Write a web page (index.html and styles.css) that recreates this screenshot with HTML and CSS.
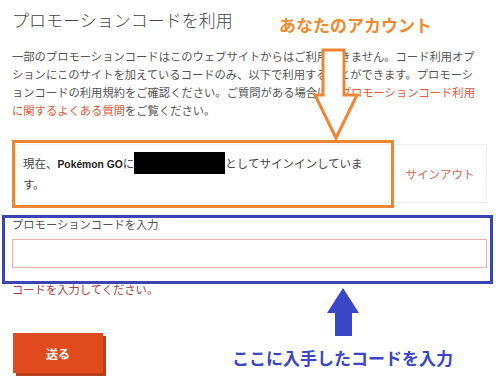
FILE: index.html
```html
<!DOCTYPE html>
<html lang="ja">
<head>
	<meta charset="UTF-8">
	<title>プロモーションコードを利用</title>
	<link rel="stylesheet" href="styles.css">
</head>
<body>
	<div class="page">
		<h1 class="title">プロモーションコードを利用</h1>
		<p class="intro">一部のプロモーションコードはこのウェブサイトからはご利用できません。コード利用オプションにこのサイトを加えているコードのみ、以下で利用することができます。プロモーションコードの利用規約をご確認ください。ご質問がある場合は、<a href="#" class="link">プロモーションコード利用に関するよくある質問</a>をご覧ください。</p>

		<div class="account">
			<div class="account-text">現在、<b>Pokémon GO</b>に<span class="hidden-name"></span>としてサインインしています。</div>
			<a href="#" class="signout">サインアウト</a>
		</div>

		<form class="code-form">
			<label class="code-label" for="code">プロモーションコードを入力</label>
			<input class="code-input" id="code" type="text">
			<div class="code-error">コードを入力してください。</div>
			<button class="send" type="button">送る</button>
		</form>
	</div>

	<!-- 説明用の注釈 -->
	<div class="note note-account">あなたのアカウント</div>
	<svg class="arrow-down" width="52" height="96" viewBox="0 0 52 96">
		<polygon points="13,4 34,4 34,49 47,49 26,92 5,49 13,49" fill="#fff" stroke="#ef8533" stroke-width="3" stroke-linejoin="miter"/>
	</svg>
	<div class="mark mark-account"></div>
	<div class="mark mark-code"></div>
	<svg class="arrow-up" width="36" height="52" viewBox="0 0 36 52">
		<polygon points="18,2 34,27 27,27 27,50 10,50 10,27 2,27" fill="#3b46c6"/>
	</svg>
	<div class="note note-code">ここに入手したコードを入力</div>
</body>
</html>
```

FILE: styles.css
```css
*{
	margin: 0;
	padding: 0;
	box-sizing: border-box;
}
body{
	background: #fff;
	color: #4a4a4a;
	font-family: "Liberation Sans", "Noto Sans CJK JP", sans-serif;
}
.page{
	width: 499px;
	padding: 12px;
}
.title{
	font-size: 17px;
	font-weight: 300;
	line-height: 20px;
	color: #444;
}
.intro{
	margin-top: 16px;
	width: 472px;
	font-size: 11.3px;
	line-height: 18px;
	color: #555;
}
.link{
	color: #e0583a;
	text-decoration: none;
}
.account{
	display: flex;
	align-items: center;
	margin-top: 24px;
	width: 475px;
	height: 59px;
	border: 1px solid #eeeeee;
}
.account-text{
	flex: 1;
	padding: 0 14px 0 10px;
	font-size: 11.5px;
	line-height: 20px;
	color: #444;
}
.account-text b{
	font-size: 10.3px;
	color: #222;
}
.hidden-name{
	display: inline-block;
	width: 91px;
	height: 22px;
	background: #000;
	vertical-align: -6px;
}
.signout{
	width: 92px;
	text-align: center;
	font-size: 11.5px;
	color: #d3674f;
	text-decoration: none;
}
.code-form{
	margin-top: 13px;
	width: 475px;
}
.code-label{
	display: block;
	font-size: 11.3px;
	line-height: 18px;
	color: #555;
}
.code-input{
	display: block;
	margin-top: 5px;
	width: 475px;
	height: 29px;
	border: 1px solid #e6b2a3;
	outline: none;
}
.code-error{
	margin-top: 13px;
	font-size: 11.3px;
	line-height: 18px;
	color: #a9423c;
}
.send{
	display: block;
	margin: 34px 0 0 1px;
	width: 90px;
	height: 40px;
	border: none;
	background: #e04a1f;
	box-shadow: 3px 3px 0 #b8401c;
	color: #fff;
	font-family: "Noto Sans CJK JP", sans-serif;
	font-size: 12px;
	font-weight: bold;
}

.note{
	position: absolute;
	font-family: "Noto Sans CJK JP", sans-serif;
	font-size: 17px;
	font-weight: bold;
	line-height: 20px;
	white-space: nowrap;
}
.note-account{
	left: 279px;
	top: 15px;
	color: #ef8a2e;
}
.note-code{
	left: 232px;
	top: 348px;
	color: #3a46c2;
}
.arrow-down{
	position: absolute;
	left: 310px;
	top: 46px;
}
.arrow-up{
	position: absolute;
	left: 325px;
	top: 286px;
}
.mark{
	position: absolute;
	border: 3px solid;
}
.mark-account{
	left: 12px;
	top: 140px;
	width: 382px;
	height: 68px;
	border-color: #ef8533;
}
.mark-code{
	left: 2px;
	top: 215px;
	width: 491px;
	height: 69px;
	border-color: #3c44b4;
}
```
